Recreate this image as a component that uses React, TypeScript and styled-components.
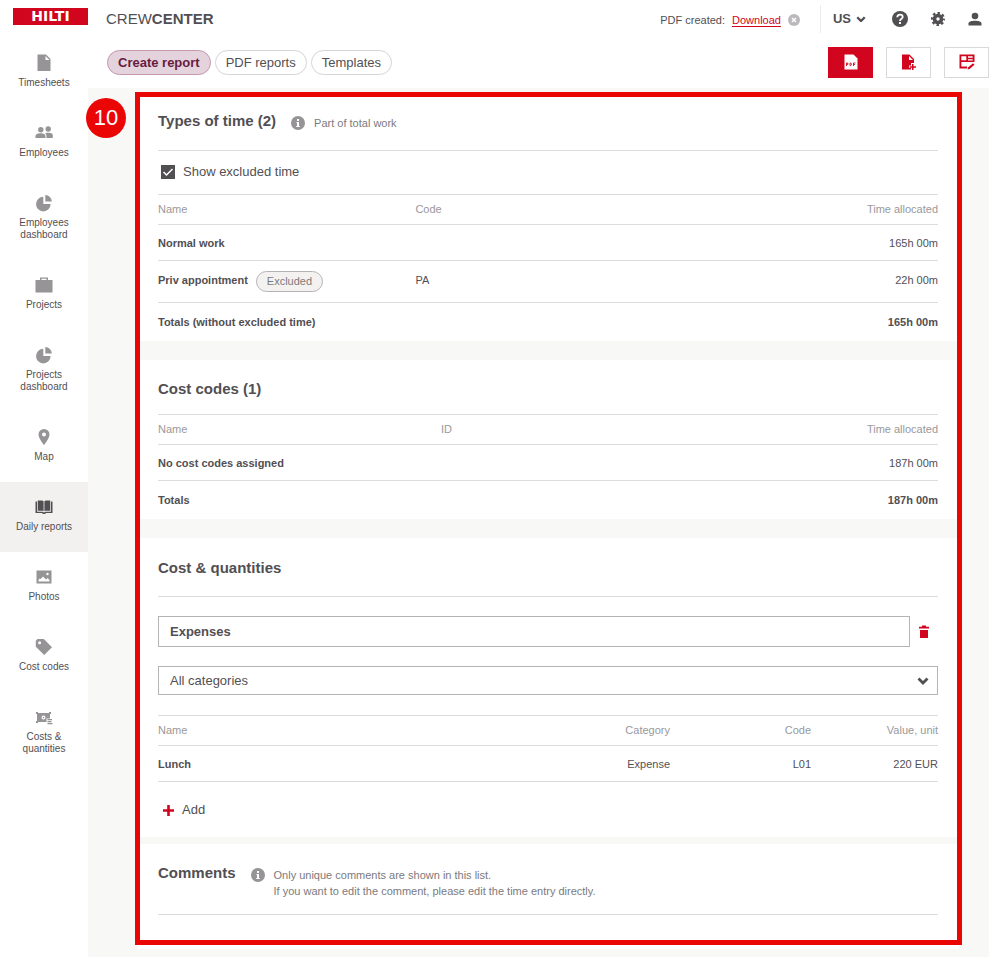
import React, { useState } from "react";
import styled, { createGlobalStyle } from "styled-components";

const ink = "#524f53";
const red = "#d2051e";
const line = "#dcdcdc";
const mute = "#9a989b";

const GlobalStyle = createGlobalStyle`
  *, *::before, *::after { box-sizing: border-box; }
  body {
    margin: 0;
    background: #fff;
    color: ${ink};
    font: 11px/16px "Liberation Sans", Arial, sans-serif;
  }
  button, input, select { font: inherit; color: inherit; }
  svg { display: block; flex: none; }
`;

const Page = styled.div`
  display: flex;
  flex-direction: column;
  min-height: 100vh;
`;

const Header = styled.header`
  display: flex;
  align-items: center;
  height: 38px;
  padding: 0 7px 0 13px;
`;

const Logo = styled.a`
  display: flex;
  align-items: center;
  justify-content: center;
  width: 75px;
  height: 17px;
  margin-bottom: 5px;
  background: ${red};
  color: #fff;
  font: bold 14px/17px "DejaVu Sans", sans-serif;
  text-decoration: none;
`;

const Product = styled.div`
  flex: 1;
  margin-left: 18px;
  padding-bottom: 1px;
  font-size: 15px;
  line-height: 20px;
`;

const Notice = styled.div`
  display: flex;
  align-items: center;
  gap: 7px;
  margin-right: 20px;
  padding-top: 2px;
  a { color: ${red}; text-underline-offset: 2px; }
`;

const IconButton = styled.button`
  display: flex;
  align-items: center;
  justify-content: center;
  padding: 0;
  border: 0;
  background: none;
  cursor: pointer;
`;

const HeaderTools = styled.div`
  display: flex;
  align-items: center;
  gap: 23px;
  height: 28px;
  padding-left: 12px;
  border-left: 1px solid #ececec;
`;

const Language = styled(IconButton)`
  gap: 5px;
  margin-right: 3px;
  font-size: 13px;
  font-weight: bold;
`;

const Body = styled.div`
  display: flex;
  flex: 1;
`;

const Sidebar = styled.nav`
  flex: none;
  width: 88px;
`;

const NavItem = styled.a<{ $active?: boolean }>`
  display: flex;
  flex-direction: column;
  align-items: center;
  padding: 16px 12px 19px;
  background: ${(p) => (p.$active ? "#f3f1ef" : "transparent")};
  color: ${ink};
  font-size: 10px;
  line-height: 12px;
  text-align: center;
  text-decoration: none;
  svg { margin-bottom: 5px; fill: ${(p) => (p.$active ? ink : "#969496")}; }
`;

const Main = styled.div`
  display: flex;
  flex: 1;
  flex-direction: column;
  min-width: 0;
`;

const Toolbar = styled.div`
  display: flex;
  align-items: center;
  justify-content: space-between;
  height: 50px;
  padding: 0 0 2px 19px;
`;

const Group = styled.div<{ $gap: number }>`
  display: flex;
  gap: ${(p) => p.$gap}px;
`;

const Pill = styled.button<{ $active?: boolean }>`
  height: 25px;
  padding: 0 10px;
  border: 1px solid ${(p) => (p.$active ? "#c697ad" : "#d6d4d6")};
  border-radius: 13px;
  background: ${(p) => (p.$active ? "#e4d3dc" : "#fff")};
  color: ${(p) => (p.$active ? "#671c3e" : ink)};
  font-size: 13px;
  font-weight: ${(p) => (p.$active ? "bold" : "normal")};
  line-height: 23px;
  cursor: pointer;
`;

const Action = styled(IconButton)<{ $primary?: boolean }>`
  width: 45px;
  height: 31px;
  border: 1px solid ${(p) => (p.$primary ? red : "#dad8da")};
  background: ${(p) => (p.$primary ? red : "#fff")};
`;

const Canvas = styled.main`
  flex: 1;
  padding: 4px 27px 12px 47px;
  background: #f8f8f6;
`;

const Frame = styled.div`
  position: relative;
  display: flex;
  flex-direction: column;
  border: 5px solid #eb0606;
  box-shadow: 0 7px 0 -3px #fff;
  background: #f8f8f6;
`;

const Step = styled.div`
  position: absolute;
  top: 1px;
  left: -54px;
  width: 40px;
  height: 40px;
  border-radius: 50%;
  background: #eb0606;
  color: #fff;
  font-size: 22px;
  line-height: 40px;
  text-align: center;
`;

const Section = styled.section<{ $after?: number; $bottom?: number }>`
  margin-bottom: ${(p) => p.$after ?? 0}px;
  padding: 0 19px ${(p) => p.$bottom ?? 0}px 18px;
  background: #fff;
`;

const SectionHead = styled.div<{ $top: number; $bottom: number; $rule?: boolean }>`
  display: flex;
  align-items: flex-start;
  gap: 15px;
  padding: ${(p) => p.$top}px 0 ${(p) => p.$bottom}px;
  border-bottom: ${(p) => (p.$rule ? `1px solid ${line}` : "0")};
`;

const Title = styled.h2`
  margin: 0;
  font-size: 15px;
  line-height: 20px;
`;

const Info = styled.div`
  display: flex;
  gap: 9px;
  padding-top: 4px;
  color: #7c7a7d;
  svg { margin-top: 1px; }
`;

const CheckRow = styled.label`
  display: flex;
  align-items: center;
  gap: 8px;
  height: 43px;
  padding: 0 0 2px 3px;
  font-size: 13px;
`;

const CheckBox = styled.span`
  position: relative;
  width: 14px;
  height: 14px;
  input {
    appearance: none;
    display: block;
    width: 14px;
    height: 14px;
    margin: 0;
    border: 1px solid ${ink};
    background: #fff;
  }
  input:checked { background: ${ink}; }
  svg { position: absolute; inset: 0; pointer-events: none; }
`;

const Table = styled.table`
  width: 100%;
  border-collapse: separate;
  border-spacing: 0;
  border-top: 1px solid ${line};
  table-layout: fixed;
`;

const HeadCell = styled.th<{ $right?: boolean; $width?: string }>`
  width: ${(p) => p.$width ?? "auto"};
  height: 30px;
  padding: 0 0 2px;
  border-bottom: 1px solid ${line};
  color: ${mute};
  font-weight: normal;
  text-align: ${(p) => (p.$right ? "right" : "left")};
`;

const Cell = styled.td<{ $right?: boolean; $bold?: boolean; $tall?: boolean; $last?: boolean }>`
  height: ${(p) => (p.$tall ? 42 : p.$last ? 38 : 36)}px;
  padding: 0 0 ${(p) => (p.$tall ? 4 : 0)}px;
  border-bottom: ${(p) => (p.$last ? "0" : `1px solid ${line}`)};
  font-weight: ${(p) => (p.$bold ? "bold" : "normal")};
  text-align: ${(p) => (p.$right ? "right" : "left")};
  white-space: nowrap;
`;

const Tagged = styled.div`
  display: flex;
  align-items: center;
  gap: 8px;
`;

const Chip = styled.span`
  height: 21px;
  margin-top: 3px;
  padding: 0 10px;
  border: 1px solid #b5b3b5;
  border-radius: 11px;
  background: #f4f2f0;
  color: #7c7a7d;
  font-weight: normal;
  line-height: 19px;
`;

const Fields = styled.div`
  display: flex;
  flex-direction: column;
  gap: 19px;
  padding: 19px 0 20px;
`;

const NameRow = styled.div`
  display: flex;
  gap: 9px;
  padding-right: 9px;
`;

const NameInput = styled.input`
  flex: 1;
  min-width: 0;
  height: 31px;
  padding: 0 11px;
  border: 1px solid #b5b3b5;
  border-radius: 0;
  background: #fff;
  font-size: 13px;
  font-weight: bold;
`;

const SelectBox = styled.div`
  position: relative;
  select {
    appearance: none;
    display: block;
    width: 100%;
    height: 29px;
    padding: 1px 30px 0 11px;
    border: 1px solid #b5b3b5;
    border-radius: 0;
    background: #fff;
    font-size: 13px;
  }
  svg {
    position: absolute;
    top: 11px;
    right: 9px;
    pointer-events: none;
  }
`;

const AddButton = styled(IconButton)`
  gap: 8px;
  height: 20px;
  margin: 18px 0 17px 5px;
  font-size: 13px;
`;

const Chevron = ({ width }: { width: number }) => (
  <svg width={width} height={(width * 8) / 12} viewBox="0 0 12 8">
    <path d="M1.5 1.5 6 6l4.500-4.500" fill="none" stroke={ink} strokeWidth="2.800" />
  </svg>
);

const InfoIcon = () => (
  <svg width="14" height="14" viewBox="0 0 14 14">
    <circle cx="7" cy="7" r="7" fill="#969496" />
    <path d="M6 3h2v2H6zM5.500 6H8v4h.8v1H5.200v-1H6V7h-.5z" fill="#fff" />
  </svg>
);

const PieIcon = (
  <>
    <path d="M8.300 2.800a7.300 7.300 0 1 0 7.300 7.300H8.300z" />
    <path d="M10.300 1a6.500 6.500 0 0 1 6.500 6.500h-6.500z" />
  </>
);

const navItems: { label: string; icon: React.ReactNode; active?: boolean }[] = [
  {
    label: "Timesheets",
    icon: <path fillRule="evenodd" d="M2.500.5h8.500l4.500 4.500v12h-13zM10.500 2v4h4z" />,
  },
  {
    label: "Employees",
    icon: (
      <>
        <circle cx="5.800" cy="5.800" r="2.700" />
        <circle cx="13.200" cy="5" r="2.700" />
        <path d="M.5 14v-1.800C.5 10 3 9.300 5.500 9.300s4.900.7 4.900 2.900V14z" />
        <path d="M11.400 14v-2.200c0-1-.4-1.800-1.200-2.500 1-.5 2-.6 3.200-.6 2.800 0 4.400.7 4.400 2.600V14z" />
      </>
    ),
  },
  { label: "Employees dashboard", icon: PieIcon },
  {
    label: "Projects",
    icon: <path fillRule="evenodd" d="M5 1.500h8V4h4.500v12.500H.5V4H5zM6.500 2.800V4h5V2.800z" />,
  },
  { label: "Projects dashboard", icon: PieIcon },
  {
    label: "Map",
    icon: (
      <path
        fillRule="evenodd"
        d="M9 1a5.500 5.500 0 0 0-5.500 5.500C3.500 10.500 9 17 9 17s5.500-6.500 5.500-10.500A5.500 5.500 0 0 0 9 1zm0 3.500a2 2 0 1 1 0 4 2 2 0 0 1 0-4z"
      />
    ),
  },
  {
    label: "Daily reports",
    active: true,
    icon: (
      <>
        <path d="M.5 3.500h1.600v10.300h5.400l1.500.8 1.500-.8h5.400V3.500h1.600v11.500h-6.200L9.800 16H8.200l-1.500-1H.5z" />
        <path d="M2.800 2.500h3.900c1 0 1.600.3 1.900.8v10c-.6-.4-1.200-.5-2-.5H2.800zM15.200 2.500h-3.900c-1 0-1.600.3-1.900.8v10c.6-.4 1.200-.5 2-.5h3.800z" />
      </>
    ),
  },
  {
    label: "Photos",
    icon: (
      <path
        fillRule="evenodd"
        d="M1.500 2.500h15v13h-15zM3.500 13.500h11v-1.500l-2-2-1.500 1.500-3-3-2.300 2.500-1-.5-1.200 1.500zM12.500 4.800a1.200 1.200 0 1 0 0 2.400 1.200 1.200 0 0 0 0-2.400z"
      />
    ),
  },
  {
    label: "Cost codes",
    icon: (
      <path
        fillRule="evenodd"
        d="M2.500 1h6.300L17 9.200 9.200 17 .8 8.800V2.700zM4.600 3.300a1.500 1.500 0 1 0 0 3 1.500 1.500 0 0 0 0-3z"
      />
    ),
  },
  {
    label: "Costs & quantities",
    icon: (
      <>
        <path
          fillRule="evenodd"
          d="M1 4h2v1h11V4h2v2h-1v4.500h-3.500V14H3v1H1v-2h1V6H1zM8.500 7.500a2 2 0 1 0 0 4 2 2 0 0 0 0-4z"
        />
        <circle cx="8.500" cy="9.500" r=".8" />
        <path d="M12.500 11h4.500v1.300h-4.500zM12.500 13h4v1.300h-4zM12.500 15h5v1.300h-5z" />
      </>
    ),
  },
];

export default function App() {
  const [showExcluded, setShowExcluded] = useState(true);
  const [category, setCategory] = useState("Expenses");

  return (
    <Page>
      <GlobalStyle />
      <Header>
        <Logo href="#">HILTI</Logo>
        <Product>
          CREW<b>CENTER</b>
        </Product>
        <Notice>
          <span>PDF created:</span>
          <a href="#download">Download</a>
          <IconButton aria-label="Dismiss">
            <svg width="12" height="12" viewBox="0 0 12 12">
              <circle cx="6" cy="6" r="6" fill="#bbb9bb" />
              <path d="m4 4 4 4m0-4L4 8" stroke="#fff" strokeWidth="1.500" />
            </svg>
          </IconButton>
        </Notice>
        <HeaderTools>
          <Language>
            US
            <Chevron width={10} />
          </Language>
          <IconButton aria-label="Help">
            <svg width="16" height="16" viewBox="0 0 16 16">
              <circle cx="8" cy="8" r="8" fill={ink} />
              <path
                d="M5.300 6.200C5.300 4.500 6.400 3.600 8 3.600s2.700 1 2.700 2.300C10.700 7.700 8 7.800 8 10"
                fill="none"
                stroke="#fff"
                strokeWidth="1.800"
              />
              <path d="M7 11h2v2H7z" fill="#fff" />
            </svg>
          </IconButton>
          <IconButton aria-label="Settings">
            <svg width="14" height="14" viewBox="0 0 14 14">
              <g fill="none" stroke={ink}>
                <circle cx="7" cy="7" r="3.500" strokeWidth="3.600" />
                <circle cx="7" cy="7" r="6" strokeWidth="2.200" strokeDasharray="2.500 2.212" strokeDashoffset="1.250" />
              </g>
            </svg>
          </IconButton>
          <IconButton aria-label="Account">
            <svg width="14" height="14" viewBox="0 0 14 14" fill={ink}>
              <circle cx="7" cy="4" r="3.300" />
              <path d="M.5 13.500v-2C.5 9.500 3.500 8.700 7 8.700s6.500.8 6.500 2.800v2z" />
            </svg>
          </IconButton>
        </HeaderTools>
      </Header>

      <Body>
        <Sidebar>
          {navItems.map((item) => (
            <NavItem key={item.label} href="#" $active={item.active}>
              <svg width="18" height="18" viewBox="0 0 18 18">
                {item.icon}
              </svg>
              {item.label}
            </NavItem>
          ))}
        </Sidebar>

        <Main>
          <Toolbar>
            <Group $gap={4}>
              <Pill $active>Create report</Pill>
              <Pill>PDF reports</Pill>
              <Pill>Templates</Pill>
            </Group>
            <Group $gap={13}>
              <Action $primary aria-label="Create PDF">
                <svg width="14" height="16" viewBox="0 0 14 16">
                  <path d="M.5.5h9l4 4v11H.5z" fill="#fff" />
                  <path
                    d="M2.500 12V9h1.300v1.500H2.500M6 9v2.500h.8c.8 0 .8-2.500 0-2.500zM9.500 12V9h2M9.500 10.500h1.500"
                    fill="none"
                    stroke={red}
                    strokeWidth=".9"
                  />
                </svg>
              </Action>
              <Action aria-label="New report">
                <svg width="16" height="16" viewBox="0 0 16 16" fill={red}>
                  <path fillRule="evenodd" d="M1 .5h7.500L13 5v4h-3v2.500H8v2.500h2v1.500H1zM8 2v4h4z" />
                  <path d="M11 10h1.500v2.300h2.500v1.500h-2.500V16H11v-2.200H8.700v-1.500H11z" />
                </svg>
              </Action>
              <Action aria-label="Edit template">
                <svg width="16" height="16" viewBox="0 0 16 16" fill={red}>
                  <path fillRule="evenodd" d="M.5.5h15V8H2.300v4.500H8v2H.5zM2.300 2.300v4h5v-4zM9 2.300v1.500h4.700V2.300zM9 5.200v1.200h4.700V5.200z" />
                  <path d="m9 13.500 5-4.300 1.500 1.500-5 4.300-2 .5z" />
                </svg>
              </Action>
            </Group>
          </Toolbar>

          <Canvas>
            <Frame>
              <Section $after={19}>
                <SectionHead $top={14} $bottom={19} $rule>
                  <Title>Types of time (2)</Title>
                  <Info>
                    <InfoIcon />
                    Part of total work
                  </Info>
                </SectionHead>
                <CheckRow>
                  <CheckBox>
                    <input
                      type="checkbox"
                      checked={showExcluded}
                      onChange={(e) => setShowExcluded(e.target.checked)}
                    />
                    <svg width="14" height="14" viewBox="0 0 14 14">
                      <path d="m2.500 7 3 3 6-6" fill="none" stroke="#fff" strokeWidth="1.500" />
                    </svg>
                  </CheckBox>
                  Show excluded time
                </CheckRow>
                <Table>
                  <thead>
                    <tr>
                      <HeadCell $width="33%">Name</HeadCell>
                      <HeadCell>Code</HeadCell>
                      <HeadCell $right>Time allocated</HeadCell>
                    </tr>
                  </thead>
                  <tbody>
                    <tr>
                      <Cell $bold>Normal work</Cell>
                      <Cell />
                      <Cell $right>165h 00m</Cell>
                    </tr>
                    {showExcluded && (
                      <tr>
                        <Cell $bold $tall>
                          <Tagged>
                            Priv appointment
                            <Chip>Excluded</Chip>
                          </Tagged>
                        </Cell>
                        <Cell $tall>PA</Cell>
                        <Cell $right $tall>22h 00m</Cell>
                      </tr>
                    )}
                    <tr>
                      <Cell $bold $last>Totals (without excluded time)</Cell>
                      <Cell $last />
                      <Cell $right $bold $last>165h 00m</Cell>
                    </tr>
                  </tbody>
                </Table>
              </Section>

              <Section $after={19}>
                <SectionHead $top={19} $bottom={15}>
                  <Title>Cost codes (1)</Title>
                </SectionHead>
                <Table>
                  <thead>
                    <tr>
                      <HeadCell $width="283px">Name</HeadCell>
                      <HeadCell>ID</HeadCell>
                      <HeadCell $right>Time allocated</HeadCell>
                    </tr>
                  </thead>
                  <tbody>
                    <tr>
                      <Cell $bold>No cost codes assigned</Cell>
                      <Cell />
                      <Cell $right>187h 00m</Cell>
                    </tr>
                    <tr>
                      <Cell $bold $last>Totals</Cell>
                      <Cell $last />
                      <Cell $right $bold $last>187h 00m</Cell>
                    </tr>
                  </tbody>
                </Table>
              </Section>

              <Section $after={7}>
                <SectionHead $top={20} $bottom={18} $rule>
                  <Title>Cost &amp; quantities</Title>
                </SectionHead>
                <Fields>
                  <NameRow>
                    <NameInput
                      aria-label="Category name"
                      value={category}
                      onChange={(e) => setCategory(e.target.value)}
                    />
                    <IconButton aria-label="Delete category">
                      <svg width="10" height="14" viewBox="0 0 10 14" fill={red}>
                        <path d="M0 1.800h3V.5h4v1.300h3v1.700H0zM1 5h8v8H1z" />
                      </svg>
                    </IconButton>
                  </NameRow>
                  <SelectBox>
                    <select aria-label="Category filter" defaultValue="all">
                      <option value="all">All categories</option>
                      <option value="expense">Expense</option>
                    </select>
                    <Chevron width={12} />
                  </SelectBox>
                </Fields>
                <Table>
                  <thead>
                    <tr>
                      <HeadCell>Name</HeadCell>
                      <HeadCell $right $width="141px">Category</HeadCell>
                      <HeadCell $right $width="141px">Code</HeadCell>
                      <HeadCell $right $width="127px">Value, unit</HeadCell>
                    </tr>
                  </thead>
                  <tbody>
                    <tr>
                      <Cell $bold>Lunch</Cell>
                      <Cell $right>Expense</Cell>
                      <Cell $right>L01</Cell>
                      <Cell $right>220 EUR</Cell>
                    </tr>
                  </tbody>
                </Table>
                <AddButton>
                  <svg width="11" height="11" viewBox="0 0 11 11">
                    <path d="M5.500 0v11M0 5.500h11" stroke={red} strokeWidth="2.600" />
                  </svg>
                  Add
                </AddButton>
              </Section>

              <Section $bottom={25}>
                <SectionHead $top={19} $bottom={15} $rule>
                  <Title>Comments</Title>
                  <Info>
                    <InfoIcon />
                    <span>
                      Only unique comments are shown in this list.
                      <br />
                      If you want to edit the comment, please edit the time entry directly.
                    </span>
                  </Info>
                </SectionHead>
              </Section>

              <Step>10</Step>
            </Frame>
          </Canvas>
        </Main>
      </Body>
    </Page>
  );
}
